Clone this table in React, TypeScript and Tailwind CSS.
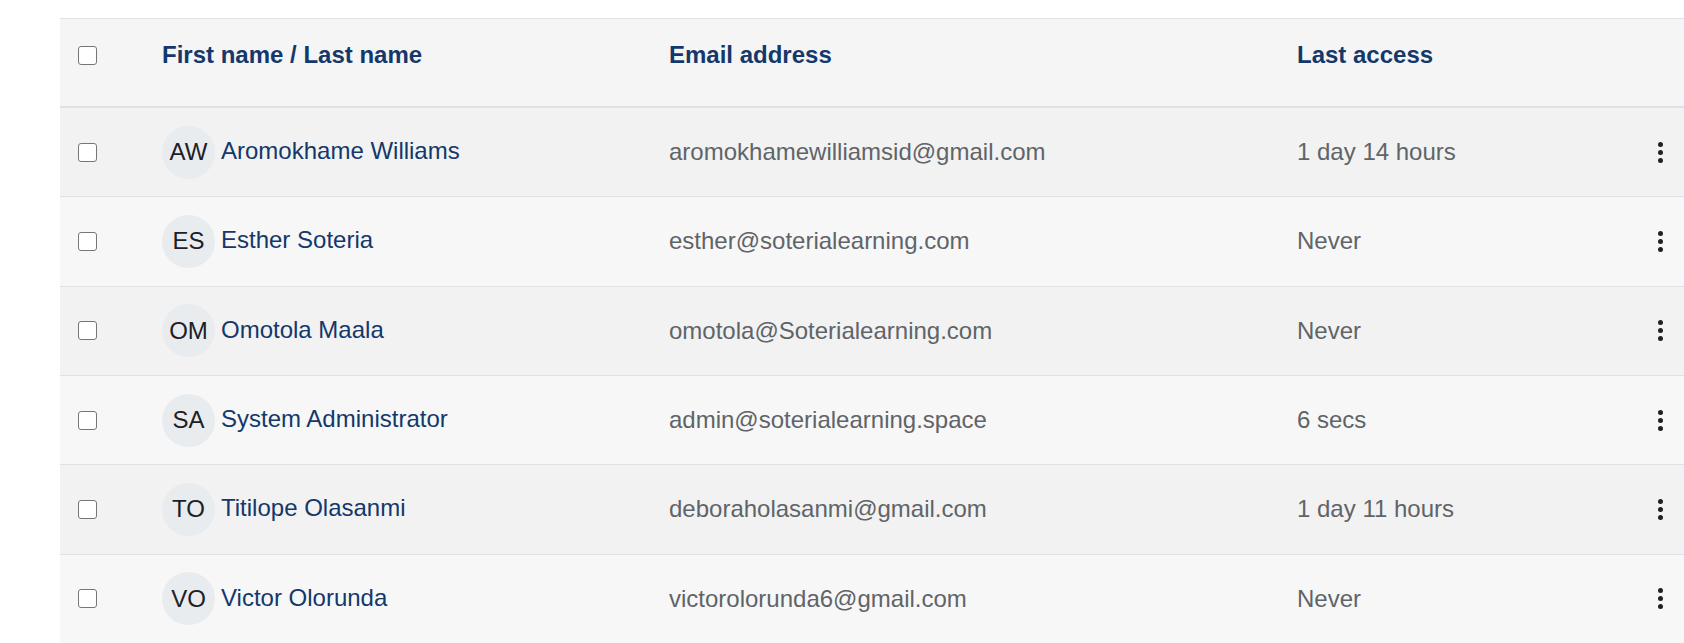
const users = [
  { initials: "AW", name: "Aromokhame Williams", email: "aromokhamewilliamsid@gmail.com", access: "1 day 14 hours" },
  { initials: "ES", name: "Esther Soteria", email: "esther@soterialearning.com", access: "Never" },
  { initials: "OM", name: "Omotola Maala", email: "omotola@Soterialearning.com", access: "Never" },
  { initials: "SA", name: "System Administrator", email: "admin@soterialearning.space", access: "6 secs" },
  { initials: "TO", name: "Titilope Olasanmi", email: "deboraholasanmi@gmail.com", access: "1 day 11 hours" },
  { initials: "VO", name: "Victor Olorunda", email: "victorolorunda6@gmail.com", access: "Never" },
];

function Checkbox() {
  return (
    <span className="block w-[19px] h-[19px] rounded-[3px] border-[1.5px] border-[#767676] bg-white" />
  );
}

function Kebab() {
  return (
    <span className="flex flex-col items-center gap-[3px]">
      <span className="block w-[5px] h-[5px] rounded-full bg-[#1d2125]" />
      <span className="block w-[5px] h-[5px] rounded-full bg-[#1d2125]" />
      <span className="block w-[5px] h-[5px] rounded-full bg-[#1d2125]" />
    </span>
  );
}

export default function App() {
  return (
    <div className="min-h-screen bg-white pt-[18px] pl-[60px] font-['Liberation_Sans',Arial,sans-serif] text-[24px]">
      <div className="border-t border-[#dee2e6]">
        <div className="flex h-[89px] items-start bg-[#f5f5f5] border-b-2 border-[#dee2e6] pt-[18px] leading-[36px] font-bold text-[#14386b]">
          <div className="w-[102px] pl-[18px] h-[36px] flex items-center">
            <Checkbox />
          </div>
          <div className="w-[507px]">First name / Last name</div>
          <div className="w-[628px]">Email address</div>
          <div className="flex-1">Last access</div>
          <div className="w-[48px]" />
        </div>
        {users.map((u, i) => (
          <div
            key={u.email}
            className={`flex h-[89.33px] items-center border-b border-[#dee2e6] ${
              i % 2 === 0 ? "bg-[#f2f2f2]" : "bg-[#f7f7f7]"
            }`}
          >
            <div className="w-[102px] pl-[18px] flex items-center">
              <Checkbox />
            </div>
            <div className="w-[507px] flex items-center gap-[6px]">
              <span className="flex w-[53px] h-[53px] shrink-0 items-center justify-center rounded-full bg-[#e9ecef] text-[24px] text-[#1d2125]">
                {u.initials}
              </span>
              <span className="text-[#14386b] mb-[2px]">{u.name}</span>
            </div>
            <div className="w-[628px] text-[#5f6469]">{u.email}</div>
            <div className="flex-1 text-[#5f6469]">{u.access}</div>
            <div className="w-[48px] flex justify-center">
              <Kebab />
            </div>
          </div>
        ))}
      </div>
    </div>
  );
}
